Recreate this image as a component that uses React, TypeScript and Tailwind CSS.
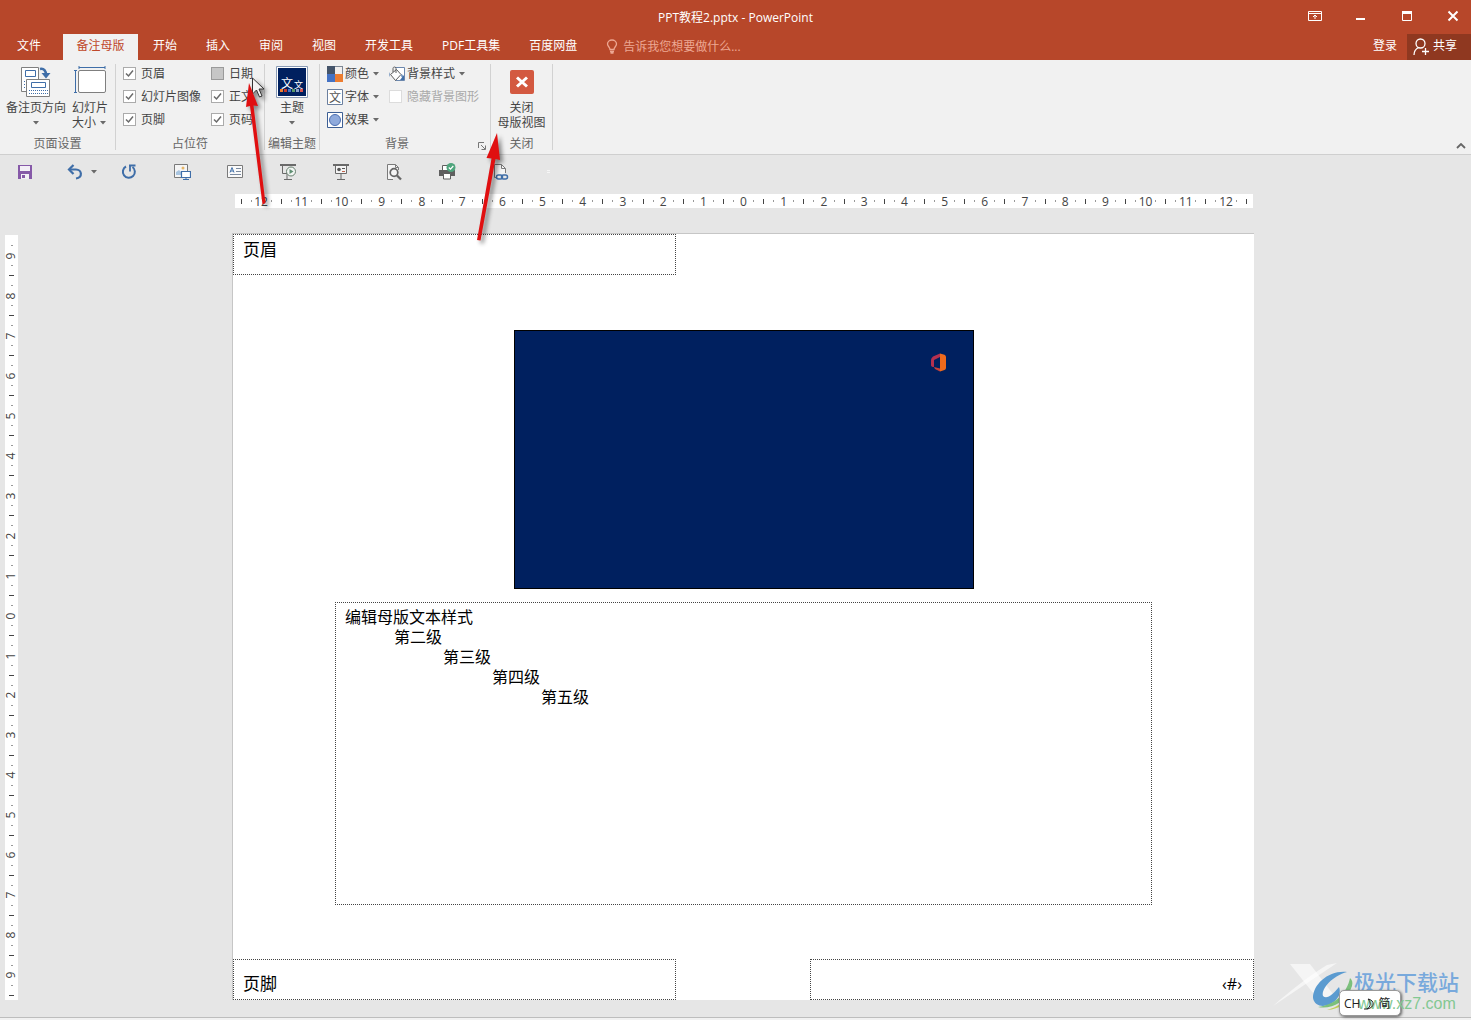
import type { ReactNode } from "react";

const TABS = ["开始", "插入", "审阅", "视图", "开发工具", "PDF工具集", "百度网盘"];

const H_NUMBERS = Array.from({ length: 25 }, (_, i) => Math.abs(i - 12));
const V_NUMBERS = Array.from({ length: 19 }, (_, i) => Math.abs(i - 9));

function Caret() {
  return (
    <svg width="6" height="4" viewBox="0 0 6 4" className="shrink-0" aria-hidden="true">
      <path d="M0 0h6L3 3.5z" fill="#6a6a6a" />
    </svg>
  );
}

function Check({ id, label, state = "on" }: { id: string; label: string; state?: "on" | "hover" | "off" }) {
  return (
    <div className="flex h-[23px] items-center gap-[5px]">
      <span className="grid size-[13px] shrink-0">
        <input
          id={id}
          type="checkbox"
          defaultChecked={state === "on"}
          disabled={state === "off"}
          className={
            state === "hover"
              ? "col-start-1 row-start-1 size-[13px] appearance-none border border-[#9a9a9a] bg-[#c6c6c6]"
              : state === "off"
                ? "col-start-1 row-start-1 size-[13px] appearance-none border border-[#dcdcdc] bg-white"
                : "peer col-start-1 row-start-1 size-[13px] appearance-none border border-[#ababab] bg-white"
          }
        />
        <svg
          viewBox="0 0 13 13"
          className="pointer-events-none invisible col-start-1 row-start-1 size-[13px] peer-checked:visible"
          aria-hidden="true"
        >
          <path d="M3 6.5 5.5 9 10 3.5" fill="none" stroke="#6a6a6a" strokeWidth="1.5" />
        </svg>
      </span>
      <label htmlFor={id} className={state === "off" ? "whitespace-nowrap text-[#a9a9a9]" : "whitespace-nowrap"}>
        {label}
      </label>
    </div>
  );
}

function Group({ label, className, children, launcher }: { label: string; className: string; children: ReactNode; launcher?: boolean }) {
  return (
    <section className="flex" aria-label={label}>
      <div className={`flex flex-col justify-between ${className}`}>
        <div className="flex pt-[2px]">{children}</div>
        <div className="flex h-[21px] items-center text-[#666]">
          <span className="flex flex-1 justify-center whitespace-nowrap">{label}</span>
          {launcher && (
            <button aria-label="背景设置" className="mt-1 w-4">
              <svg width="8" height="8" viewBox="0 0 8 8" fill="none" stroke="#777" className="mx-auto" aria-hidden="true">
                <path d="M.5 6V.5H6M3 3l4 4M7.5 3.5v4h-4" />
              </svg>
            </button>
          )}
        </div>
      </div>
      <div className="my-1 w-px bg-[#d2d2d2]" />
    </section>
  );
}

function SmallButton({ icon, label }: { icon: ReactNode; label: string }) {
  return (
    <button className="flex h-[23px] items-center gap-[2px] whitespace-nowrap">
      {icon}
      <span className="mr-[2px]">{label}</span>
      <Caret />
    </button>
  );
}

function OrientationIcon() {
  return (
    <svg width="30" height="32" viewBox="0 0 30 32" fill="none" aria-hidden="true">
      <path d="M.5 1.5h17v24H.5z" fill="#fff" stroke="#7f7f7f" />
      <path d="M4.5 4.5h10v6h-10z" stroke="#3f6ea8" />
      <path d="M3 15.5h10M3 18.5h10M3 21.5h10" stroke="#3f6ea8" strokeDasharray="1 1" />
      <path d="M5.500 13.500h23v17h-23z" fill="#fff" stroke="#7f7f7f" />
      <path d="M10.500 16.500h14v5h-14z" stroke="#3f6ea8" />
      <path d="M8 24.500h19M8 27.500h19" stroke="#3f6ea8" strokeDasharray="1 1" />
      <path d="M19 3c4-1 6 2 6 6" stroke="#3f6ea8" strokeWidth="2.500" />
      <path d="M20.500 7h9L25 12.500z" fill="#3f6ea8" />
    </svg>
  );
}

function SlideSizeIcon() {
  return (
    <svg width="32" height="32" viewBox="0 0 32 32" fill="none" aria-hidden="true">
      <rect x="4.500" y="4.500" width="27" height="22" rx="1.500" fill="#fff" stroke="#7f7f7f" />
      <path d="M5 1.500h26M5 0v3M31 0v3M1.500 5v21M0 4.500h3M0 26.500h3" stroke="#3f6ea8" />
    </svg>
  );
}

function ThemeIcon() {
  return (
    <svg width="32" height="32" viewBox="0 0 32 32" aria-hidden="true">
      <path d="M.5.5h31v31H.5z" fill="#fff" stroke="#8a9bb5" />
      <path d="M2 2h28v28H2z" fill="#00205f" />
      <text x="5" y="22" fill="#fff" fontSize="12" fontFamily="Noto Sans CJK SC, sans-serif">文</text>
      <text x="18" y="22" fill="#fff" fontSize="9" fontFamily="Noto Sans CJK SC, sans-serif">文</text>
      <path d="M4 23h3v3H4z" fill="#ed7d31" />
      <path d="M8 23h3v3H8z" fill="#c0392b" />
      <path d="M12 23h3v3h-3z" fill="#4472c4" />
      <path d="M16 23h3v3h-3z" fill="#5a9a6a" />
      <path d="M20 23h3v3h-3z" fill="#8aa0c8" />
      <path d="M24 23h3v3h-3z" fill="#d9534f" />
    </svg>
  );
}

function ColorsIcon() {
  return (
    <svg width="16" height="16" viewBox="0 0 16 16" aria-hidden="true">
      <path d="M0 0h16v16H0z" fill="#7c8795" />
      <path d="M0 0h8v8H0z" fill="#44546a" />
      <path d="M8 1h7v7H8z" fill="#f1efee" />
      <path d="M0 8h8v8H0z" fill="#4472c4" />
      <path d="M8 8h8v8H8z" fill="#ed7d31" />
    </svg>
  );
}

function FontsIcon() {
  return (
    <svg width="16" height="16" viewBox="0 0 16 16" aria-hidden="true">
      <path d="M.5.5h15v15H.5z" fill="#fff" stroke="#6b7f9e" />
      <text x="2" y="12.500" fontSize="12" fill="#555" fontFamily="Noto Sans CJK SC, sans-serif">文</text>
    </svg>
  );
}

function EffectsIcon() {
  return (
    <svg width="16" height="16" viewBox="0 0 16 16" aria-hidden="true">
      <path d="M.5.5h15v15H.5z" fill="#fff" stroke="#3d5f94" />
      <circle cx="8" cy="8" r="5.500" fill="#8faadc" stroke="#4a6db0" />
    </svg>
  );
}

function BackgroundStyleIcon() {
  return (
    <svg width="16" height="16" viewBox="0 0 16 16" fill="none" aria-hidden="true">
      <path d="M6 1.500h9.500v13H6" fill="#fff" stroke="#6b87ad" />
      <path d="m11 14 4-5v5z" fill="#3f6ea8" />
      <path d="m1.500 8.500 6-5 4.500 5-5.500 6z" fill="#fff" stroke="#5f5f5f" />
      <path d="M4 6V2.500C4 .5 7 .5 7 2.500V7" stroke="#5f5f5f" />
      <path d="M12.500 8c1.500 1 1.500 2.500 1 4-1-1-1.500-2-1-4z" fill="#3f6ea8" />
      <path d="M1 6c-1 2-.5 4 0 5z" fill="#3f6ea8" />
    </svg>
  );
}

function CloseMasterIcon() {
  return (
    <svg width="24" height="24" viewBox="0 0 24 24" aria-hidden="true">
      <rect width="24" height="24" rx="2" fill="#d35940" />
      <path d="m7 7.500 10 9m0-9-10 9" stroke="#fff" strokeWidth="3" />
    </svg>
  );
}

const QUICK_TOOLS = [
  {
    label: "恢复",
    icon: (
      <>
        <path d="M6 3.500a6 6 0 1 0 6.500.5" stroke="#3f6ea8" strokeWidth="2" />
        <path d="M9 2.500h6.500M10 2v6.500" stroke="#3f6ea8" strokeWidth="1.800" />
      </>
    ),
  },
  {
    label: "图片演示",
    icon: (
      <>
        <path d="M1.500 1.500h13v13h-13z" fill="#f5f5f5" stroke="#7a7a7a" />
        <circle cx="10" cy="5" r="1.500" fill="#e5b567" />
        <path d="M3 12V9l3-2 3 3v2z" fill="#a9c5e0" />
        <path d="M8.500 8.500h9v6h-9z" fill="#fff" stroke="#3f6ea8" strokeWidth="1.200" />
        <path d="M13 15v2M10 16.500h6" stroke="#3f6ea8" />
      </>
    ),
  },
  {
    label: "文本框",
    icon: (
      <>
        <path d="M1.500 2.500h15v12h-15z" fill="#fafafa" stroke="#7a7a7a" />
        <path d="m4 9.500 2-5 2 5M4.800 8h2.500" stroke="#3f6ea8" />
        <path d="M10 5.500h5M10 8.500h5M4 11.500h11" stroke="#7a8aa0" />
      </>
    ),
  },
  {
    label: "从头开始放映",
    icon: (
      <>
        <path d="M1 2h16" stroke="#6a6a6a" strokeWidth="2" />
        <path d="M3.500 2v8.500H8M8 11v5M5 16.500h8" stroke="#6a6a6a" />
        <circle cx="12" cy="8.500" r="4.500" fill="#f2f5f3" stroke="#68806f" />
        <path d="M10.500 6v5l4-2.500z" fill="#5e8f72" />
      </>
    ),
  },
  {
    label: "放映",
    icon: (
      <>
        <path d="M1 2h16" stroke="#6a6a6a" strokeWidth="2" />
        <path d="M3.500 3v7.500h11V3" fill="#f5f5f5" stroke="#6a6a6a" />
        <path d="M9 11v5M5 16.500h8" stroke="#6a6a6a" />
        <circle cx="7" cy="6.500" r="1.800" fill="#555" />
        <path d="M10 5.500h3" stroke="#555" />
        <path d="M10 8.500h3" stroke="#c0614a" />
      </>
    ),
  },
  {
    label: "打印预览",
    icon: (
      <>
        <path d="M8 16.500H2.500v-15h8l3 3V7" fill="#f5f5f5" stroke="#7a7a7a" />
        <path d="M10.500 1.500v3h3" stroke="#7a7a7a" />
        <circle cx="9" cy="9.500" r="3.800" fill="#f5f5f5" stroke="#666" strokeWidth="1.700" />
        <path d="m12 12.500 4 4" stroke="#666" strokeWidth="2.300" />
      </>
    ),
  },
  {
    label: "快速打印",
    icon: (
      <>
        <path d="M1 7h16v6H1z" fill="#5f5f5f" />
        <path d="M4.500 7V2.500h8V7" fill="#fff" stroke="#5f5f5f" />
        <path d="M5.500 10.500h7v5.500h-7z" fill="#fff" stroke="#5f5f5f" />
        <circle cx="13" cy="4.500" r="4.500" fill="#4fa57d" />
        <path d="m10.800 4.500 1.700 1.700 2.800-3.200" stroke="#fff" strokeWidth="1.200" />
      </>
    ),
  },
  {
    label: "插入链接",
    icon: (
      <>
        <path d="M6 14.500H3.500v-13h7l4 4V10" fill="#f5f5f5" stroke="#7a7a7a" />
        <path d="M10.500 1.500v4h4" stroke="#7a7a7a" />
        <rect x="5.500" y="12" width="6" height="4" rx="2" stroke="#3f6ea8" strokeWidth="1.500" />
        <rect x="10.500" y="12" width="6" height="4" rx="2" stroke="#3f6ea8" strokeWidth="1.500" />
      </>
    ),
  },
  {
    label: "自定义快速访问工具栏",
    icon: <path d="M3 7.500h3M3 9.500h3" stroke="#f6f6f6" />,
  },
];

function HorizontalRuler() {
  return (
    <div className="ml-[3px] mr-px flex h-[14px] items-center bg-white pl-px pr-[2px] text-[12px] text-[#444]">
      {H_NUMBERS.map((n, i) => (
        <div key={i} className="flex min-w-0 flex-[4_1_0%] items-center">
          <span className="flex min-w-0 flex-1 justify-center"><i className="h-[5px] w-px shrink-0 bg-[#444]" /></span>
          <span className="flex min-w-0 flex-1 justify-center"><i className="h-[2px] w-px shrink-0 bg-[#999]" /></span>
          <span className="flex h-[14px] min-w-0 flex-1 items-center justify-center"><b className="shrink-0 font-normal">{n}</b></span>
          <span className="flex min-w-0 flex-1 justify-center"><i className="h-[2px] w-px shrink-0 bg-[#999]" /></span>
        </div>
      ))}
      <span className="flex min-w-0 flex-1 justify-center"><i className="h-[5px] w-px shrink-0 bg-[#444]" /></span>
    </div>
  );
}

function VerticalRuler() {
  return (
    <div className="ml-[5px] mt-[2px] flex w-[13px] shrink-0 flex-col items-center bg-white pt-[6px] text-[12px] text-[#444]">
      {V_NUMBERS.map((n, i) => (
        <div key={i} className="flex min-h-0 flex-1 flex-col items-center">
          <span className="flex min-h-0 flex-1 items-center"><i className="h-px w-[2px] bg-[#999]" /></span>
          <span className="flex min-h-0 flex-1 items-center"><b className="-rotate-90 font-normal leading-none">{n}</b></span>
          <span className="flex min-h-0 flex-1 items-center"><i className="h-px w-[2px] bg-[#999]" /></span>
          <span className="flex min-h-0 flex-1 items-center"><i className="h-px w-[5px] bg-[#444]" /></span>
        </div>
      ))}
    </div>
  );
}

function NotesPage() {
  return (
    <div className="flex flex-col border-l border-t border-[#c6c6c6] bg-white text-black">
      <div className="h-[41px] w-[443px] border border-dotted border-[#444] px-[9px] pt-[3px] text-[17px] leading-6">页眉</div>
      <div className="mt-[55px] flex h-[259px] w-[460px] justify-end self-center border border-black bg-[#00205f] pr-[26px] pt-[22px]">
        <svg width="16" height="19" viewBox="0 0 16 19" aria-label="Office">
          <path d="M9 .5 2 3.500Q0 5 0 7v5q0 2 3 2V7l6-3z" fill="#b5304f" />
          <path d="m9 .5 4.500 1.300Q15 2.500 15 4v11q0 1.500-1.500 2L9 18.500z" fill="#ef6a1c" />
          <path d="m3 14 6 1.500v3L4 16z" fill="#c9403a" />
        </svg>
      </div>
      <div className="mt-[13px] h-[303px] w-[817px] self-center border border-dotted border-[#444] px-[9px] pt-[4px] text-[16px] leading-5">
        <p>编辑母版文本样式</p>
        <p className="pl-[49px]">第二级</p>
        <p className="pl-[98px]">第三级</p>
        <p className="pl-[147px]">第四级</p>
        <p className="pl-[196px]">第五级</p>
      </div>
      <div className="mt-[54px] flex justify-between">
        <div className="flex h-[41px] w-[443px] items-end border border-dotted border-[#444] px-[9px] pb-[3px] text-[17px] leading-6">页脚</div>
        <div className="flex h-[41px] w-[444px] items-end justify-end border border-dotted border-[#444] px-[11px] pb-[3px] text-[16px] leading-6">‹#›</div>
      </div>
    </div>
  );
}

function Arrows() {
  return (
    <svg width="560" height="260" viewBox="0 0 560 260" className="pointer-events-none absolute left-0 top-0 drop-shadow-[3px_3px_2px_rgba(0,0,0,0.45)]" aria-hidden="true">
      <path d="M252.500 78v16l4-4 3 7 2.500-1-3-7h5z" fill="#f4f4f4" stroke="#333" />
      <path d="m249 83 9 23-4.500-.5L265.500 203l-3 1.500L250 106l-4 1z" fill="#e00f10" />
      <path d="m497 133 3 27-4.500-1L480.500 240.500l-3.500-.5L491.500 158.500l-5-.5z" fill="#e00f10" />
    </svg>
  );
}

function Watermark() {
  return (
    <div className="pointer-events-none absolute bottom-0 right-0 h-[64px] w-[200px]">
      <svg width="200" height="64" viewBox="0 0 200 64" fill="none" className="absolute inset-0" aria-hidden="true">
        <path d="M19 8h20l26 34H46z" fill="#fff" opacity=".6" />
        <path d="M66 7 2 50C20 34 38 20 56 9z" fill="#fff" opacity=".6" />
        <path d="M76 16c-18-2-34 12-34 26 2 10 14 10 22 3 4-4 6-9 4-14-6 7-12 13-16 9-2-8 10-20 24-24z" fill="#5b9bd0" />
        <path d="M47 51c12 3 29-5 34-21 1-4 0-6-2-8-3 15-15 27-32 29z" fill="#7cc07c" />
        <path d="M56 54c13-1 21-7 23-15-5 7-13 12-23 15z" fill="#c3cf59" />
      </svg>
      <span className="absolute left-[83px] top-[12px] whitespace-nowrap text-[21px] font-medium leading-7 text-[#78a9dc]">极光下载站</span>
      <div className="absolute bottom-[4px] left-[68px] h-[26px] w-[62px] rounded-[5px] border border-[#999] bg-white shadow-[1px_1px_3px_rgba(0,0,0,0.6)]" />
      <span className="absolute left-[87px] top-[38px] font-['Liberation_Sans'] text-[16px] leading-5 text-[#83c892]">www.xz7.com</span>
      <span className="absolute left-[73px] top-[38px] flex gap-[3px] whitespace-nowrap text-[12px] leading-5 text-[#222]">
        <span>CH</span>
        <svg width="12" height="20" viewBox="0 0 12 20" fill="none" stroke="#222" aria-hidden="true">
          <path d="M5 5c7 1 7 9-1 10 4-2 4-7 1-10zM1 15l3 0" />
        </svg>
        <span>简</span>
      </span>
    </div>
  );
}

export default function App() {
  return (
    <div className="relative flex min-h-screen flex-col bg-[#e6e6e6] font-['Open_Sans','Noto_Sans_CJK_SC',sans-serif] text-[12px] leading-[15px] text-[#444]">
      <header className="bg-[#b7472a] text-white">
        <div className="grid h-[34px] grid-cols-[1fr_auto_1fr] items-center">
          <span />
          <h1>PPT教程2.pptx - PowerPoint</h1>
          <div className="flex justify-end gap-8 pb-[2px] pr-[11px]">
            <button aria-label="功能区显示选项">
              <svg width="14" height="14" viewBox="0 0 14 14" fill="none" stroke="#fff" aria-hidden="true">
                <path d="M.5 2.500h13v9H.5zM.5 4.500h13M7 10V6M5 8l2-2 2 2" />
              </svg>
            </button>
            <button aria-label="最小化">
              <svg width="14" height="14" viewBox="0 0 14 14" aria-hidden="true"><path d="M2 9h9v2H2z" fill="#fff" /></svg>
            </button>
            <button aria-label="最大化">
              <svg width="14" height="14" viewBox="0 0 14 14" fill="none" aria-hidden="true">
                <path d="M2.500 2.500h9v9h-9z" stroke="#fff" />
                <path d="M2 2h10v3H2z" fill="#fff" />
              </svg>
            </button>
            <button aria-label="关闭">
              <svg width="14" height="14" viewBox="0 0 14 14" aria-hidden="true">
                <path d="m2.500 2.500 9 9m0-9-9 9" stroke="#fff" strokeWidth="2" />
              </svg>
            </button>
          </div>
        </div>
        <nav className="flex h-[26px] items-stretch whitespace-nowrap" aria-label="功能区">
          <button className="mr-[5px] w-[58px] pb-1">文件</button>
          <button className="w-[75px] bg-[#f1f1f1] pb-1 text-[#c0482a]">备注母版</button>
          <div className="flex gap-[29px] pl-[15px]">
            {TABS.map((tab) => (
              <button key={tab} className="pb-1">{tab}</button>
            ))}
          </div>
          <label className="ml-[29px] flex items-center gap-[5px] pb-[2px]">
            <svg width="12" height="15" viewBox="0 0 12 15" fill="none" stroke="#eda793" strokeWidth="1.300" aria-hidden="true">
              <path d="M4 10.500C4 8 1.500 7.500 1.500 5a4.500 4 0 0 1 9 0c0 2.500-2.500 3-2.500 5.500zM4 12.500h4M4.500 14h3" />
            </svg>
            <input aria-label="告诉我您想要做什么" placeholder="告诉我您想要做什么..." className="w-[160px] bg-transparent outline-none placeholder:text-[#eda793]" />
          </label>
          <div className="ml-auto flex">
            <button className="px-[10px] pb-1">登录</button>
            <button className="flex w-[64px] items-center gap-1 bg-[#8f3820] pb-1 pl-[6px]">
              <svg width="16" height="18" viewBox="0 0 16 18" fill="none" stroke="#fff" strokeWidth="1.300" className="mt-1" aria-hidden="true">
                <circle cx="7.500" cy="5.500" r="4.500" />
                <path d="M1 17c0-4 1.500-6 4.500-7.500M9 13.500h7M12.500 10v7" />
              </svg>
              共享
            </button>
          </div>
        </nav>
      </header>

      <div className="flex h-[95px] border-b border-[#cfcfcf] bg-[#f1f1f1]">
        <Group label="页面设置" className="w-[115px]">
          <button className="ml-[3px] flex w-[66px] flex-col items-center gap-[2px] whitespace-nowrap pt-1">
            <OrientationIcon />
            <span>备注页方向</span>
            <span className="pt-1"><Caret /></span>
          </button>
          <button className="flex w-[42px] flex-col items-center gap-[2px] pt-1">
            <SlideSizeIcon />
            <span className="whitespace-nowrap">
              幻灯片
              <span className="flex items-center gap-1">大小 <Caret /></span>
            </span>
          </button>
        </Group>
        <Group label="占位符" className="w-[148px]">
          <div className="w-[88px] pl-[7px]">
            <Check id="header" label="页眉" />
            <Check id="image" label="幻灯片图像" />
            <Check id="footer" label="页脚" />
          </div>
          <div className="pl-[7px]">
            <Check id="date" label="日期" state="hover" />
            <Check id="body" label="正文" />
            <Check id="number" label="页码" />
          </div>
        </Group>
        <Group label="编辑主题" className="w-[54px]">
          <button className="flex w-full flex-col items-center gap-[2px] pt-1">
            <ThemeIcon />
            <span>主题</span>
            <span className="pt-1"><Caret /></span>
          </button>
        </Group>
        <Group label="背景" className="w-[170px]" launcher>
          <div className="w-[69px] pl-[7px]">
            <SmallButton icon={<ColorsIcon />} label="颜色" />
            <SmallButton icon={<FontsIcon />} label="字体" />
            <SmallButton icon={<EffectsIcon />} label="效果" />
          </div>
          <div>
            <SmallButton icon={<BackgroundStyleIcon />} label="背景样式" />
            <Check id="hide-graphics" label="隐藏背景图形" state="off" />
          </div>
        </Group>
        <Group label="关闭" className="w-[61px]">
          <button className="flex w-full flex-col items-center gap-[6px] whitespace-nowrap pt-2">
            <CloseMasterIcon />
            <span>关闭<br />母版视图</span>
          </button>
        </Group>
        <button aria-label="折叠功能区" className="ml-auto self-end px-[5px] pb-[5px]">
          <svg width="10" height="6" viewBox="0 0 10 6" fill="none" aria-hidden="true">
            <path d="m1 5 4-4 4 4" stroke="#666" strokeWidth="1.800" />
          </svg>
        </button>
      </div>

      <div className="flex h-[34px] items-center gap-[35px] pl-4" role="toolbar" aria-label="快速访问工具栏">
        <div className="-mr-[13px] flex gap-8">
          <button aria-label="保存">
            <svg width="18" height="18" viewBox="0 0 18 18" aria-hidden="true">
              <path d="M2 2h14v14H2z" fill="#8659a8" />
              <path d="M4 3h10v5H4zM5 11h8v5H5z" fill="#f3eff6" />
              <path d="M6 12h3v3H6z" fill="#8659a8" />
            </svg>
          </button>
          <button aria-label="撤消" className="flex w-8 items-center gap-[7px]">
            <svg width="18" height="18" viewBox="0 0 18 18" fill="none" stroke="#3f6ea8" aria-hidden="true">
              <path d="M3 6.500h7c6 0 7 8 0 9" strokeWidth="2.200" />
              <path d="M7.500 2 3 6.500 7.500 11" strokeWidth="2.200" />
            </svg>
            <Caret />
          </button>
        </div>
        {QUICK_TOOLS.map((tool) => (
          <button key={tool.label} aria-label={tool.label}>
            <svg width="18" height="18" viewBox="0 0 18 18" fill="none" aria-hidden="true">{tool.icon}</svg>
          </button>
        ))}
      </div>

      <main className="flex flex-1 flex-col pb-[17px] pt-[5px]">
        <div className="flex pl-[18px] pr-[3px]">
          <div className="mx-auto w-full max-w-[1022px]">
            <HorizontalRuler />
          </div>
        </div>
        <div className="mt-[25px] flex pr-[3px]">
          <VerticalRuler />
          <div className="mx-auto w-full max-w-[1022px]">
            <NotesPage />
          </div>
        </div>
      </main>
      <footer className="h-[3px] border-t border-[#bdbdbd] bg-[#f1f1f1]" />

      <Watermark />
      <Arrows />
    </div>
  );
}
